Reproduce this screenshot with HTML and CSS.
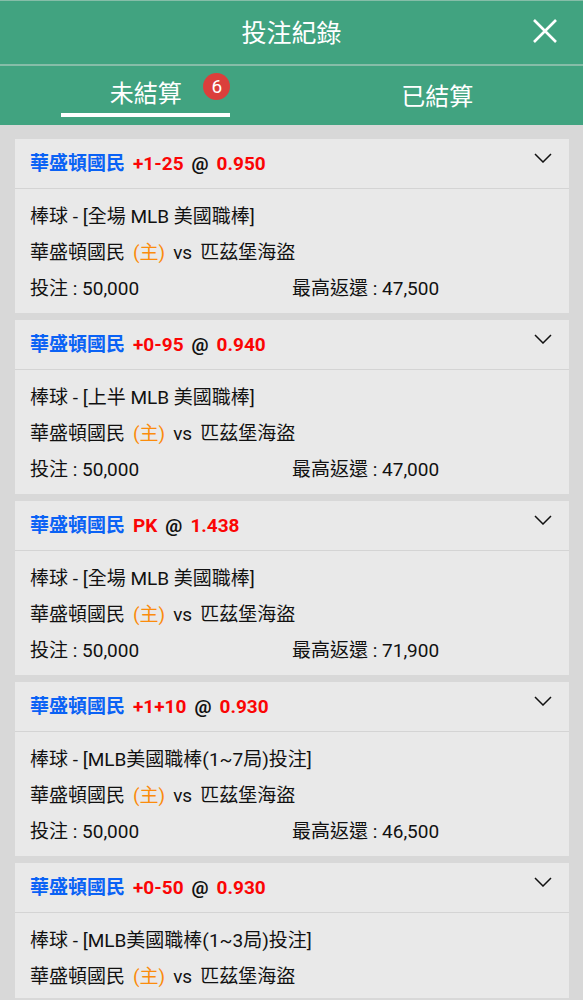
FILE: index.html
```html
<!DOCTYPE html>
<html lang="zh-Hant">
<head>
    <meta charset="UTF-8">
    <meta name="viewport" content="width=device-width, initial-scale=1.0">
    <title>投注紀錄</title>
    <link rel="stylesheet" href="styles.css">
</head>
<body>
    <header class="header">
        <h1>投注紀錄</h1>
        <button type="button" class="close-btn" aria-label="關閉">
            <svg width="24" height="24" viewBox="0 0 24 24" fill="none" stroke="currentColor" stroke-width="2.6"><path d="M1 1 23 23M23 1 1 23"/></svg>
        </button>
    </header>

    <nav class="tabs">
        <a href="#unsettled" class="tab active"><span class="tab-label">未結算<span class="badge">6</span></span></a>
        <a href="#settled" class="tab"><span class="tab-label">已結算</span></a>
    </nav>

    <main class="bet-list" id="unsettled">
        <article class="bet">
            <div class="bet-head">
                <h2><span class="team">華盛頓國民</span><span class="odds">+1-25</span><span>@</span><span class="odds">0.950</span></h2>
                <button type="button" class="toggle" aria-label="展開">
                    <svg width="18" height="10" viewBox="0 0 18 10" fill="none" stroke="currentColor" stroke-width="1.5"><path d="M1 1 9 9 17 1"/></svg>
                </button>
            </div>
            <div class="bet-body">
                <p>棒球 - [全場 MLB 美國職棒]</p>
                <p class="match"><span>華盛頓國民</span><span class="home">(主)</span><span>vs</span><span>匹茲堡海盜</span></p>
                <p class="amounts"><span>投注 : 50,000</span><span>最高返還 : 47,500</span></p>
            </div>
        </article>

        <article class="bet">
            <div class="bet-head">
                <h2><span class="team">華盛頓國民</span><span class="odds">+0-95</span><span>@</span><span class="odds">0.940</span></h2>
                <button type="button" class="toggle" aria-label="展開">
                    <svg width="18" height="10" viewBox="0 0 18 10" fill="none" stroke="currentColor" stroke-width="1.5"><path d="M1 1 9 9 17 1"/></svg>
                </button>
            </div>
            <div class="bet-body">
                <p>棒球 - [上半 MLB 美國職棒]</p>
                <p class="match"><span>華盛頓國民</span><span class="home">(主)</span><span>vs</span><span>匹茲堡海盜</span></p>
                <p class="amounts"><span>投注 : 50,000</span><span>最高返還 : 47,000</span></p>
            </div>
        </article>

        <article class="bet">
            <div class="bet-head">
                <h2><span class="team">華盛頓國民</span><span class="odds">PK</span><span>@</span><span class="odds">1.438</span></h2>
                <button type="button" class="toggle" aria-label="展開">
                    <svg width="18" height="10" viewBox="0 0 18 10" fill="none" stroke="currentColor" stroke-width="1.5"><path d="M1 1 9 9 17 1"/></svg>
                </button>
            </div>
            <div class="bet-body">
                <p>棒球 - [全場 MLB 美國職棒]</p>
                <p class="match"><span>華盛頓國民</span><span class="home">(主)</span><span>vs</span><span>匹茲堡海盜</span></p>
                <p class="amounts"><span>投注 : 50,000</span><span>最高返還 : 71,900</span></p>
            </div>
        </article>

        <article class="bet">
            <div class="bet-head">
                <h2><span class="team">華盛頓國民</span><span class="odds">+1+10</span><span>@</span><span class="odds">0.930</span></h2>
                <button type="button" class="toggle" aria-label="展開">
                    <svg width="18" height="10" viewBox="0 0 18 10" fill="none" stroke="currentColor" stroke-width="1.5"><path d="M1 1 9 9 17 1"/></svg>
                </button>
            </div>
            <div class="bet-body">
                <p>棒球 - [MLB美國職棒(1~7局)投注]</p>
                <p class="match"><span>華盛頓國民</span><span class="home">(主)</span><span>vs</span><span>匹茲堡海盜</span></p>
                <p class="amounts"><span>投注 : 50,000</span><span>最高返還 : 46,500</span></p>
            </div>
        </article>

        <article class="bet">
            <div class="bet-head">
                <h2><span class="team">華盛頓國民</span><span class="odds">+0-50</span><span>@</span><span class="odds">0.930</span></h2>
                <button type="button" class="toggle" aria-label="展開">
                    <svg width="18" height="10" viewBox="0 0 18 10" fill="none" stroke="currentColor" stroke-width="1.5"><path d="M1 1 9 9 17 1"/></svg>
                </button>
            </div>
            <div class="bet-body">
                <p>棒球 - [MLB美國職棒(1~3局)投注]</p>
                <p class="match"><span>華盛頓國民</span><span class="home">(主)</span><span>vs</span><span>匹茲堡海盜</span></p>
            </div>
        </article>
    </main>
</body>
</html>
```
FILE: styles.css
```css
:root {
    --green: #41a380;
    --line-green: #86bda8;
    --page-bg: #d8d8d8;
    --card-bg: #e9e9e9;
    --line: #d4d4d4;
    --blue: #0a62f5;
    --red: #fb0505;
    --orange: #fb8c0c;
    --badge: #db3f3b;
}

* {
    box-sizing: border-box;
}

body {
    margin: 0;
    height: 100vh;
    display: flex;
    flex-direction: column;
    overflow: hidden;
    background-color: var(--page-bg);
    color: #111;
    font-family: Roboto, "Noto Sans CJK TC", sans-serif;
    font-size: 19px;
}

h1, h2, p {
    margin: 0;
}

button {
    padding: 0;
    border: 0;
    background: none;
    color: inherit;
    cursor: pointer;
}

svg {
    display: block;
}

/* Header */
.header {
    flex: none;
    display: grid;
    grid-template-columns: 1fr auto 1fr;
    align-items: center;
    height: 66px;
    padding: 2px 26px 0;
    border-top: 1px solid var(--line-green);
    border-bottom: 2px solid var(--line-green);
    background-color: var(--green);
    color: white;
}

.header h1 {
    grid-column: 2;
    font-size: 25px;
    font-weight: 400;
    line-height: 36px;
}

.close-btn {
    justify-self: end;
    padding-bottom: 6px;
}

/* Tabs */
.tabs {
    flex: none;
    display: flex;
    height: 59px;
    background-color: var(--green);
}

.tab {
    flex: 1;
    display: flex;
    justify-content: center;
    align-items: center;
    color: white;
    font-size: 24px;
    line-height: 38px;
    text-align: center;
    text-decoration: none;
}

.tab-label {
    position: relative;
    width: 58%;
    padding-top: 2px;
}

.active .tab-label {
    padding-top: 0;
    border-bottom: 4px solid white;
}

.badge {
    position: absolute;
    top: -2px;
    right: 0;
    width: 27px;
    height: 27px;
    border-radius: 50%;
    background-color: var(--badge);
    font-size: 19px;
    line-height: 27px;
}

/* Bet list */
.bet-list {
    flex: 1;
    min-height: 0;
    margin-bottom: 2px;
    padding: 14px 14px 0 15px;
    overflow-y: auto;
    scrollbar-width: none;
}

.bet {
    margin-bottom: 7px;
    background-color: var(--card-bg);
}

.bet-head {
    display: flex;
    justify-content: space-between;
    align-items: flex-start;
    height: 50px;
    padding: 0 17px 0 15px;
    border-bottom: 1px solid var(--line);
}

.bet-head h2 {
    display: flex;
    gap: 8px;
    font-size: 19px;
    font-weight: 700;
    line-height: 50px;
}

.team {
    color: var(--blue);
}

.odds {
    color: var(--red);
}

.toggle {
    padding-top: 14px;
}

.bet-body {
    padding: 10px 15px 6px;
    line-height: 36px;
}

.match {
    display: flex;
    gap: 8px;
}

.home {
    color: var(--orange);
}

.amounts {
    display: grid;
    grid-template-columns: 1fr 1fr;
}
```
